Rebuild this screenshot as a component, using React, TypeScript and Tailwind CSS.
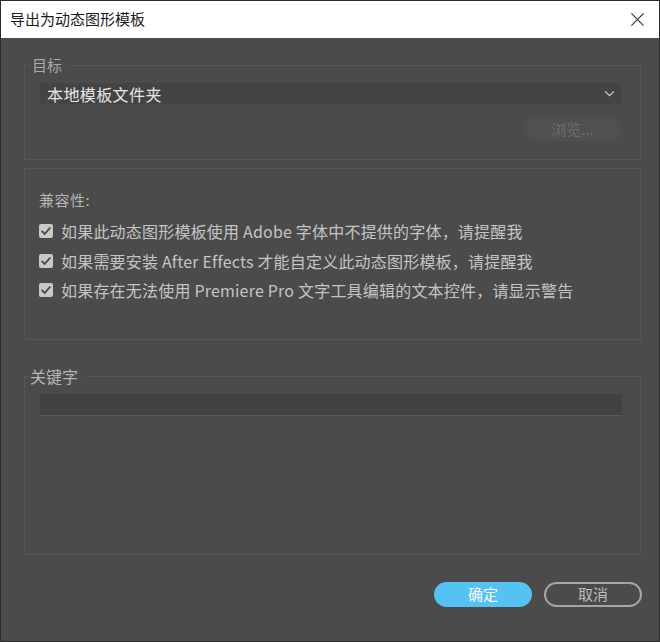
import React from "react";

const font = { fontFamily: '"Noto Sans CJK SC", "Noto Sans", sans-serif' };

const options = [
  "如果此动态图形模板使用 Adobe 字体中不提供的字体，请提醒我",
  "如果需要安装 After Effects 才能自定义此动态图形模板，请提醒我",
  "如果存在无法使用 Premiere Pro 文字工具编辑的文本控件，请显示警告",
];

const Check = () => (
  <span className="flex items-center justify-center w-[14px] h-[14px] bg-[#c9c9c9] rounded-[2px] shrink-0">
    <svg viewBox="0 0 14 14" className="w-[12px] h-[12px]">
      <polyline
        points="2.5,7.5 5.5,10.5 11.5,3.5"
        fill="none"
        stroke="#4a4a4a"
        strokeWidth="2.2"
        strokeLinecap="round"
        strokeLinejoin="round"
      />
    </svg>
  </span>
);

const App = () => {
  return (
    <div
      className="w-[660px] h-[642px] flex flex-col bg-[#4b4b4b] border border-[#2b2b2b] overflow-hidden"
      style={font}
    >
      {/* title bar */}
      <div className="h-[37px] shrink-0 bg-white flex items-center justify-between pl-[9px] pr-[14px]">
        <span className="text-[15px] text-[#1b1b1b]">导出为动态图形模板</span>
        <svg viewBox="0 0 16 16" className="w-[15px] h-[15px]">
          <path d="M1.5 1.5 L14.5 14.5 M14.5 1.5 L1.5 14.5" stroke="#333" strokeWidth="1.2" />
        </svg>
      </div>

      <div className="flex-1 flex flex-col pl-[23px] pr-[18px] pt-[17px]">
        {/* 目标 */}
        <fieldset className="border border-[#565656] pl-[15px] pr-[19px] pb-[18px]">
          <legend className="pl-[1px] pr-[7px] -ml-[9px] text-[15px] leading-[20px] text-[#a9a9a9]">目标</legend>
          <div className="mt-[8px] h-[21px] bg-[#444444] rounded-[2px] flex items-center justify-between pl-[7px] pr-[6px]">
            <span className="text-[16px] text-[#e6e6e6] leading-none tracking-[0.4px]">本地模板文件夹</span>
            <svg viewBox="0 0 12 8" className="w-[11px] h-[7px]">
              <polyline points="1,1.5 6,6.5 11,1.5" fill="none" stroke="#d0d0d0" strokeWidth="1.4" />
            </svg>
          </div>
          <div className="flex justify-end mt-[13px]">
            <div className="w-[97px] h-[24px] rounded-full bg-[#505050] flex items-center justify-center text-[15px] text-[#6c6c6c]">
              浏览...
            </div>
          </div>
        </fieldset>

        {/* 兼容性 */}
        <div className="mt-[8px] border border-[#565656] pl-[14px] pt-[21px] pb-[39px]">
          <div className="text-[15px] leading-[20px] text-[#b4b4b4] tracking-[0.5px]">兼容性:</div>
          <div className="mt-[11px] flex flex-col gap-[9.5px]">
            {options.map((t) => (
              <div key={t} className="flex items-center gap-[8px]">
                <Check />
                <span className="text-[16px] leading-[20px] text-[#c4c4c4] whitespace-nowrap tracking-[0.2px]">{t}</span>
              </div>
            ))}
          </div>
        </div>

        {/* 关键字 */}
        <fieldset className="mt-[26px] border border-[#565656] pl-[15px] pr-[18px] h-[189px]">
          <legend className="pl-0 pr-[8px] -ml-[10px] text-[16px] leading-[20px] text-[#b4b4b4]">关键字</legend>
          <div className="mt-[8px] h-[22px] bg-[#424242] border-b border-[#5a5a5a]" />
        </fieldset>

        {/* buttons */}
        <div className="mt-[27px] flex justify-end gap-[12px] -mr-[1px]">
          <div className="w-[98px] h-[25px] rounded-full bg-[#55c2f4] flex items-center justify-center text-[15px] text-white">
            确定
          </div>
          <div className="w-[98px] h-[25px] rounded-full border-2 border-[#a6a6a6] flex items-center justify-center text-[15px] text-[#bcbcbc]">
            取消
          </div>
        </div>
      </div>
    </div>
  );
};

export default App;
